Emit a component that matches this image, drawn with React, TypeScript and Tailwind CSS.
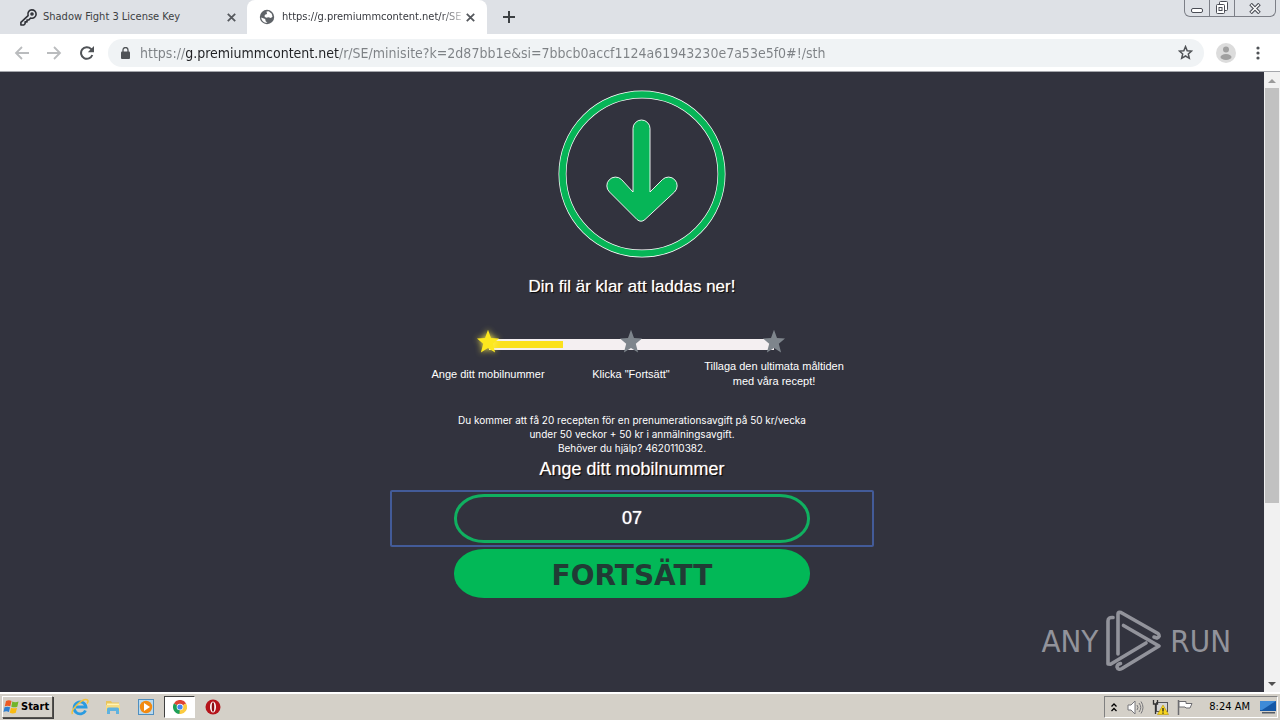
import { useState } from 'react';

const steps = [
  { label: 'Ange ditt mobilnummer', active: true },
  { label: 'Klicka "Fortsätt"', active: false },
  { label: 'Tillaga den ultimata måltiden med våra recept!', active: false }
];

const CloseIcon = () => (
  <svg width="9" height="9" viewBox="0 0 9 9" stroke="#55585d" strokeWidth="1.8">
    <path d="M.8.8l7.4 7.4M8.2.8L.8 8.2" />
  </svg>
);

const Star = ({ active }: { active: boolean }) => (
  <svg
    width="26"
    height="26"
    viewBox="0 0 26 26"
    className={active ? 'drop-shadow-[0_0_3px_#fff04a]' : ''}
  >
    <path
      d="M13 .8l3 8.3 8 .5-6.2 5.2 2.3 8.7-7.1-4.5-7.1 4.5 2.3-8.7L2 9.6l8-.5z"
      fill={active ? '#fde81e' : '#7e858c'}
    />
  </svg>
);

const TabStrip = () => (
  <div className="flex h-[34px] shrink-0 bg-[#dee1e6] text-[11px] text-[#3c4043]">
    <button type="button" className="flex w-[247px] items-center pl-5 pr-[11px]">
      <svg width="17" height="17" viewBox="0 0 17 17" fill="none" stroke="#303238" strokeWidth="1.6" strokeLinejoin="round">
        <path d="M8.1 6.6C7.2 3.2 9.3.9 11.8.9c2.5 0 4.3 1.9 4.3 4.3 0 2.6-2.5 4.8-5.5 3.8L8.8 11H7v1.9H5.1v1.8L3.8 16H.9v-2.7z" />
        <circle cx="12" cy="5" r="1" />
      </svg>
      <span className="ml-1.5 flex-1 text-left">Shadow Fight 3 License Key</span>
      <CloseIcon />
    </button>
    <button type="button" className="flex w-[240px] items-center rounded-t-lg bg-white pl-3 pr-3">
      <svg width="16" height="16" viewBox="0 0 16 16">
        <circle cx="8" cy="8" r="7.2" fill="#5f6368" />
        <path d="M2.2 8.5l4 1.5.5 2.2 1.8 1.6C5 14 2.3 11.6 2.2 8.5zM7.5 2.5l2.2-.3 3 2.5.8 3-1.7 1.3-2.3-.7-2.5.5-1.6-1.5.6-1.5 2-.8z" fill="#fff" />
      </svg>
      <span className="ml-[7px] whitespace-nowrap bg-linear-to-r from-[#303238] from-88% to-[#d8d8d8] bg-clip-text text-left text-transparent">
        https://g.premiummcontent.net/r/SE
      </span>
      <span className="ml-auto">
        <CloseIcon />
      </span>
    </button>
    <button type="button" aria-label="New tab" className="ml-4 self-center">
      <svg width="12" height="12" viewBox="0 0 12 12" stroke="#3c4043" strokeWidth="2">
        <path d="M6 0v12M0 6h12" />
      </svg>
    </button>
    <div className="ml-auto mr-1 flex h-[17px] rounded-b-md border border-t-0 border-[#7c7f87]">
      <button type="button" aria-label="Minimize" className="flex w-6 items-center justify-center pt-1">
        <svg width="13" height="5" viewBox="0 0 13 5">
          <rect x=".5" y=".5" width="11" height="4" rx="1.5" fill="#fff" stroke="#4a4d55" />
        </svg>
      </button>
      <button type="button" aria-label="Restore" className="flex w-[26px] items-center justify-center border-x border-[#7c7f87]">
        <svg width="14" height="14" viewBox="0 0 14 14" fill="#fff" stroke="#4a4d55">
          <rect x="4.5" y=".5" width="8" height="9" rx="1" />
          <rect x="1.5" y="3.5" width="8" height="9" rx="1" />
          <rect x="4" y="6.5" width="3" height="3" />
        </svg>
      </button>
      <button type="button" aria-label="Close" className="flex w-10 items-center justify-center">
        <svg width="12" height="11" viewBox="0 0 12 11">
          <path d="M1.5 1l9 9M10.5 1l-9 9" stroke="#4a4d55" strokeWidth="3.6" />
          <path d="M2 1.5l8 8M10 1.5l-8 8" stroke="#fff" strokeWidth="1.5" />
        </svg>
      </button>
    </div>
  </div>
);

const Toolbar = () => {
  const [url, setUrl] = useState(
    'https://g.premiummcontent.net/r/SE/minisite?k=2d87bb1e&si=7bbcb0accf1124a61943230e7a53e5f0#!/sth'
  );

  return (
    <div className="flex h-[38px] shrink-0 items-center border-b border-[#a5a7ac] bg-white pl-[14px] pr-5">
      <button type="button" aria-label="Back" className="mr-[18px]">
        <svg width="15" height="14" viewBox="0 0 15 14" fill="none" stroke="#babcbe" strokeWidth="1.8">
          <path d="M15 7H2M8 1L2 7l6 6" />
        </svg>
      </button>
      <button type="button" aria-label="Forward" className="mr-[18px]">
        <svg width="15" height="14" viewBox="0 0 15 14" fill="none" stroke="#babcbe" strokeWidth="1.8">
          <path d="M0 7h13M7 1l6 6-6 6" />
        </svg>
      </button>
      <button type="button" aria-label="Reload" className="mr-[14px]">
        <svg width="14" height="14" viewBox="0 0 14 14" fill="none" stroke="#505357" strokeWidth="2">
          <path d="M12.3 9A5.8 5.8 0 1 1 11 2.900L12.5 4.5" />
          <path d="M14 0v6.2H7.8z" fill="#505357" stroke="none" />
        </svg>
      </button>
      <div className="flex h-7 flex-1 items-center rounded-full bg-[#f0f3f5] pl-[13px] pr-[11px]">
        <svg width="9" height="12" viewBox="0 0 9 12">
          <rect y="4.5" width="9" height="7.5" rx="1" fill="#505357" />
          <path d="M2 5V3a2.5 2.5 0 0 1 5 0v2" fill="none" stroke="#505357" strokeWidth="1.3" />
        </svg>
        <input
          aria-label="Address"
          value={url}
          onChange={(e) => setUrl(e.target.value)}
          className="ml-[10px] min-w-0 flex-1 bg-[linear-gradient(to_right,#7d8185_46px,#202124_46px,#202124_199px,#7d8185_199px)] bg-clip-text text-sm text-transparent outline-none"
        />
        <button type="button" aria-label="Bookmark">
          <svg width="15" height="15" viewBox="0 0 15 15" fill="none" stroke="#505357" strokeWidth="1.5">
            <path d="M7.5 1.6l1.7 4.1 4.4.4-3.3 2.9 1 4.3-3.8-2.3-3.8 2.3 1-4.3L1.4 6.1l4.4-.4z" />
          </svg>
        </button>
      </div>
      <button type="button" aria-label="Profile" className="ml-3">
        <svg width="20" height="20" viewBox="0 0 20 20">
          <circle cx="10" cy="10" r="10" fill="#dcdcdc" />
          <circle cx="10" cy="6.5" r="3" fill="#a0a0a0" />
          <ellipse cx="10" cy="14" rx="5.5" ry="3" fill="#a0a0a0" />
        </svg>
      </button>
      <button type="button" aria-label="Menu" className="ml-5">
        <svg width="4" height="14" viewBox="0 0 4 14" fill="#505357">
          <circle cx="2" cy="2" r="1.6" />
          <circle cx="2" cy="7" r="1.6" />
          <circle cx="2" cy="12" r="1.6" />
        </svg>
      </button>
    </div>
  );
};

const DownloadForm = () => {
  const [phone, setPhone] = useState('07');

  return (
    <main className="flex flex-1 flex-col items-center font-['Liberation_Sans',sans-serif] text-white">
      <svg width="168" height="168" viewBox="0 0 168 168" className="ml-5 mt-[18px]">
        <circle cx="84" cy="84" r="79.5" fill="none" stroke="#fff" strokeWidth="8" />
        <circle cx="84" cy="84" r="79.5" fill="none" stroke="#06b557" strokeWidth="6.6" />
        <path
          d="M75 38.5a8.500 8.500 0 0 1 17 0V102L104.500 89.500a8.500 8.500 0 0 1 12 12.500L87 129.500q-4 3.500-8 0L51.500 102a8.500 8.500 0 0 1 12-12.500L75 102z"
          fill="#06b557"
          stroke="#fff"
          strokeWidth=".9"
        />
      </svg>
      <h1 className="mt-[17px] text-[17px] leading-6 [text-shadow:1px_1px_1px_#000,0_0_1px_#fff]">
        Din fil är klar att laddas ner!
      </h1>

      <div className="relative mt-[30px] mr-[2px] w-[429px]">
        <div
          role="progressbar"
          aria-label="Steg"
          aria-valuenow={25}
          className="absolute top-[10px] right-[72px] left-[72px] h-[11px] bg-[#f4eff1] pt-0.5"
        >
          <div className="h-[7px] bg-[#fbe11d]" style={{ width: '26%' }} />
        </div>
        <ol className="relative flex">
          {steps.map((step) => (
            <li key={step.label} className="flex w-[143px] flex-col items-center">
              <Star active={step.active} />
              <span className="mt-1 flex h-[30px] items-center text-center text-[11px] leading-[15px]">
                {step.label}
              </span>
            </li>
          ))}
        </ol>
      </div>

      <form onSubmit={(e) => e.preventDefault()} className="mt-6 flex w-[484px] flex-col items-center">
        <p className="w-[360px] text-center font-['Inter',sans-serif] text-[10px] leading-[14px]">
          Du kommer att få 20 recepten för en prenumerationsavgift på 50 kr/vecka
          <br />
          under 50 veckor + 50 kr i anmälningsavgift.
          <br />
          Behöver du hjälp? 4620110382.
        </p>
        <label htmlFor="phone" className="mt-0.5 text-lg leading-6 [text-shadow:1px_1px_1px_#000,0_0_1px_#fff]">
          Ange ditt mobilnummer
        </label>
        <div className="mt-[9px] flex w-full justify-center rounded-xs border-2 border-[#435b98] py-0.5">
          <input
            id="phone"
            type="tel"
            value={phone}
            onChange={(e) => setPhone(e.target.value)}
            className="h-[49px] w-[356px] rounded-[30px/24px] border-3 border-[#10b060] text-center text-lg outline-none [text-shadow:0_0_1px_#fff]"
          />
        </div>
        <button
          type="submit"
          className="mt-0.5 h-[49px] w-[356px] rounded-[30px/24px] bg-[#02b857] pt-1 font-['DejaVu_Sans',sans-serif] text-[28px] leading-9 font-bold text-[#213b35]"
        >
          FORTSÄTT
        </button>
      </form>
    </main>
  );
};

const Watermark = () => (
  <div className="absolute right-[49px] bottom-[20px] flex items-center gap-2 text-[31px] text-[#92939b]">
    <span>ANY</span>
    <svg width="56" height="62" viewBox="0 0 56 62" fill="none" stroke="#92939b" strokeWidth="3.6" strokeLinejoin="round" strokeLinecap="round">
      <path d="M7 7.5Q2 7 2 11v43l2.5.2L40 33" />
      <path d="M12 44V4q0-2.5 3-1.5l37 21q3 3-1 4.5l-3-1" />
      <path d="M17.5 15.5L53 36 16 58.5q-4 2-5-1.5 0-2.5 3.5-3.5" />
    </svg>
    <span>RUN</span>
  </div>
);

const Scrollbar = () => (
  <div aria-hidden="true" className="flex w-4 shrink-0 flex-col items-center bg-[#f1f1f1]">
    <svg width="16" height="16" viewBox="0 0 16 16">
      <path d="M4 11l4-4 4 4z" fill="#9a9a9a" />
    </svg>
    <div className="flex-1 self-stretch px-px">
      <div className="h-[70.5%] bg-[#c1c1c1]" />
    </div>
    <svg width="16" height="16" viewBox="0 0 16 16">
      <path d="M4 6l4 4 4-4z" fill="#505050" />
    </svg>
  </div>
);

const Taskbar = () => (
  <footer className="flex h-7 shrink-0 items-center border-t-2 border-white bg-[#d4d0c8] pl-0.5 text-[11px] text-black">
    <button
      type="button"
      className="flex h-[22px] w-[51px] items-center gap-px border border-t-white border-r-[#55524d] border-b-[#55524d] border-l-white font-bold shadow-[1px_1px_0_#404040]"
    >
      <svg width="17" height="16" viewBox="0 0 16 16">
        <path d="M2.5 2q3-1.5 5.500 0L6.800 7.300q-2.800-1.300-5.500 0z" fill="#ec5a24" />
        <path d="M8.8 2.5q3 1.400 6.200 0L13.800 7.700q-3 1.200-6 0z" fill="#72b52c" />
        <path d="M1 8.3q2.8-1.300 5.600 0L5.400 13q-2.700-1.300-5.400 0z" fill="#2f7fd0" />
        <path d="M7.5 8.7q3 1.300 6 0L12.300 13.800q-3 1.300-6 0z" fill="#f9bb12" />
      </svg>
      Start
    </button>
    <div className="ml-3 flex items-center gap-[3px]">
      <button type="button" aria-label="Internet Explorer" className="flex h-[22px] w-[30px] items-center justify-center">
        <svg width="18" height="18" viewBox="0 0 18 18" fill="none">
          <path d="M14.5 12.5A6 6 0 1 1 15 9H5" stroke="#2a9be0" strokeWidth="2.8" />
          <path d="M1.5 16C-1 12 12-.5 16.5 2c1 1 .3 2.5-.5 3.5" stroke="#f3c33c" strokeWidth="1.5" />
        </svg>
      </button>
      <button type="button" aria-label="Explorer" className="flex h-[22px] w-[30px] items-center justify-center">
        <svg width="16" height="16" viewBox="0 0 16 16">
          <path d="M1 2h5l1 1.5h7V12H1z" fill="#e9c45b" />
          <path d="M2 4.5h12V8H2z" fill="#fff4b5" />
          <path d="M1 6h14v6H1z" fill="#f6dc83" />
          <path d="M2 15V10q0-1.500 1.500-1.500h9Q14 8.500 14 10v5h-3v-3H5v3z" fill="#5fb2df" />
        </svg>
      </button>
      <button type="button" aria-label="Media Player" className="flex h-[22px] w-[30px] items-center justify-center">
        <svg width="16" height="16" viewBox="0 0 16 16">
          <rect x=".5" y=".5" width="15" height="15" fill="#b9d9ee" stroke="#4f8fc0" />
          <circle cx="8" cy="8" r="6.2" fill="#f28a12" />
          <path d="M6 4l6 4-6 4z" fill="#fff" />
        </svg>
      </button>
      <button
        type="button"
        aria-label="Chrome"
        className="flex h-[22px] w-[31px] items-center justify-center border border-t-[#404040] border-r-white border-b-white border-l-[#404040] bg-white"
      >
        <svg width="14" height="14" viewBox="0 0 14 14">
          <path d="M7 7L.9 3.5A7 7 0 0 1 13.1 3.5z" fill="#df4434" />
          <path d="M7 7L.9 3.5A7 7 0 0 0 6.5 14L10 8.7z" fill="#1e9f58" />
          <path d="M7 7l6.1-3.5A7 7 0 0 1 6.5 14z" fill="#fbcb3f" />
          <circle cx="7" cy="7" r="3.3" fill="#fff" />
          <circle cx="7" cy="7" r="2.6" fill="#4486f0" />
        </svg>
      </button>
      <button type="button" aria-label="Opera" className="flex h-[22px] w-[30px] items-center justify-center">
        <svg width="16" height="16" viewBox="0 0 16 16">
          <circle cx="8" cy="8" r="7.5" fill="#b5141b" />
          <ellipse cx="8" cy="8" rx="3" ry="5.5" fill="#fff" />
          <ellipse cx="8" cy="8" rx="1.3" ry="4.8" fill="#8a0c12" />
        </svg>
      </button>
    </div>
    <div className="ml-auto mr-0.5 flex h-[22px] items-center border border-t-[#808080] border-r-white border-b-white border-l-[#808080] pr-px pl-1.5">
      <svg width="6" height="9" viewBox="0 0 6 9" fill="none" stroke="#000" strokeWidth="1.3">
        <path d="M.5 3.5L3 1l2.5 2.5M.5 8L3 5.5 5.5 8" />
      </svg>
      <svg width="17" height="15" viewBox="0 0 17 15" fill="none" stroke="#77777b" className="ml-2.5">
        <path d="M1 5h3l4-4v13l-4-4H1z" fill="#fff" />
        <path d="M10 5q2 2.5 0 5M12 3q3.5 4.5 0 9M14 1.5q4 6 0 12" />
      </svg>
      <svg width="17" height="16" viewBox="0 0 17 16" className="ml-2">
        <rect x="4.5" y="3.5" width="11" height="9" fill="#d5d5d5" stroke="#55555a" />
        <path d="M1.5 1v4h4V1M3.5 5v10" fill="none" stroke="#333" strokeWidth="1.3" />
        <path d="M11 6l5.5 9.5h-11z" fill="#f7d51e" stroke="#b99500" strokeWidth=".6" />
        <path d="M11 9v3.5M11 13.5v1.2" stroke="#222" strokeWidth="1.3" />
      </svg>
      <svg width="16" height="15" viewBox="0 0 16 15" className="ml-2" stroke="#6c6c70">
        <path d="M1.5 0v15" strokeWidth="1.5" />
        <path d="M2 1.5h7v2h6l-2 4.5H9L8 7H2z" fill="#fff" />
      </svg>
      <time className="ml-4 whitespace-nowrap">8:24 AM</time>
      <svg width="16" height="14" viewBox="0 0 16 14" className="ml-2.5">
        <rect y="1" width="16" height="10" fill="#1558a6" />
        <path d="M0 1h16L2 10H0z" fill="#3e8bd8" />
        <path d="M2 12h13v1.5H2z" fill="#555c66" />
      </svg>
    </div>
  </footer>
);

const App = () => {
  return (
    <div className="flex h-screen flex-col overflow-hidden bg-[#32333e] font-['DejaVu_Sans_Condensed','Noto_Sans',sans-serif]">
      <TabStrip />
      <Toolbar />
      <div className="relative flex min-h-0 flex-1">
        <DownloadForm />
        <Scrollbar />
        <div className="pointer-events-none absolute inset-0">
          <Watermark />
        </div>
      </div>
      <Taskbar />
    </div>
  );
};

export default App;
